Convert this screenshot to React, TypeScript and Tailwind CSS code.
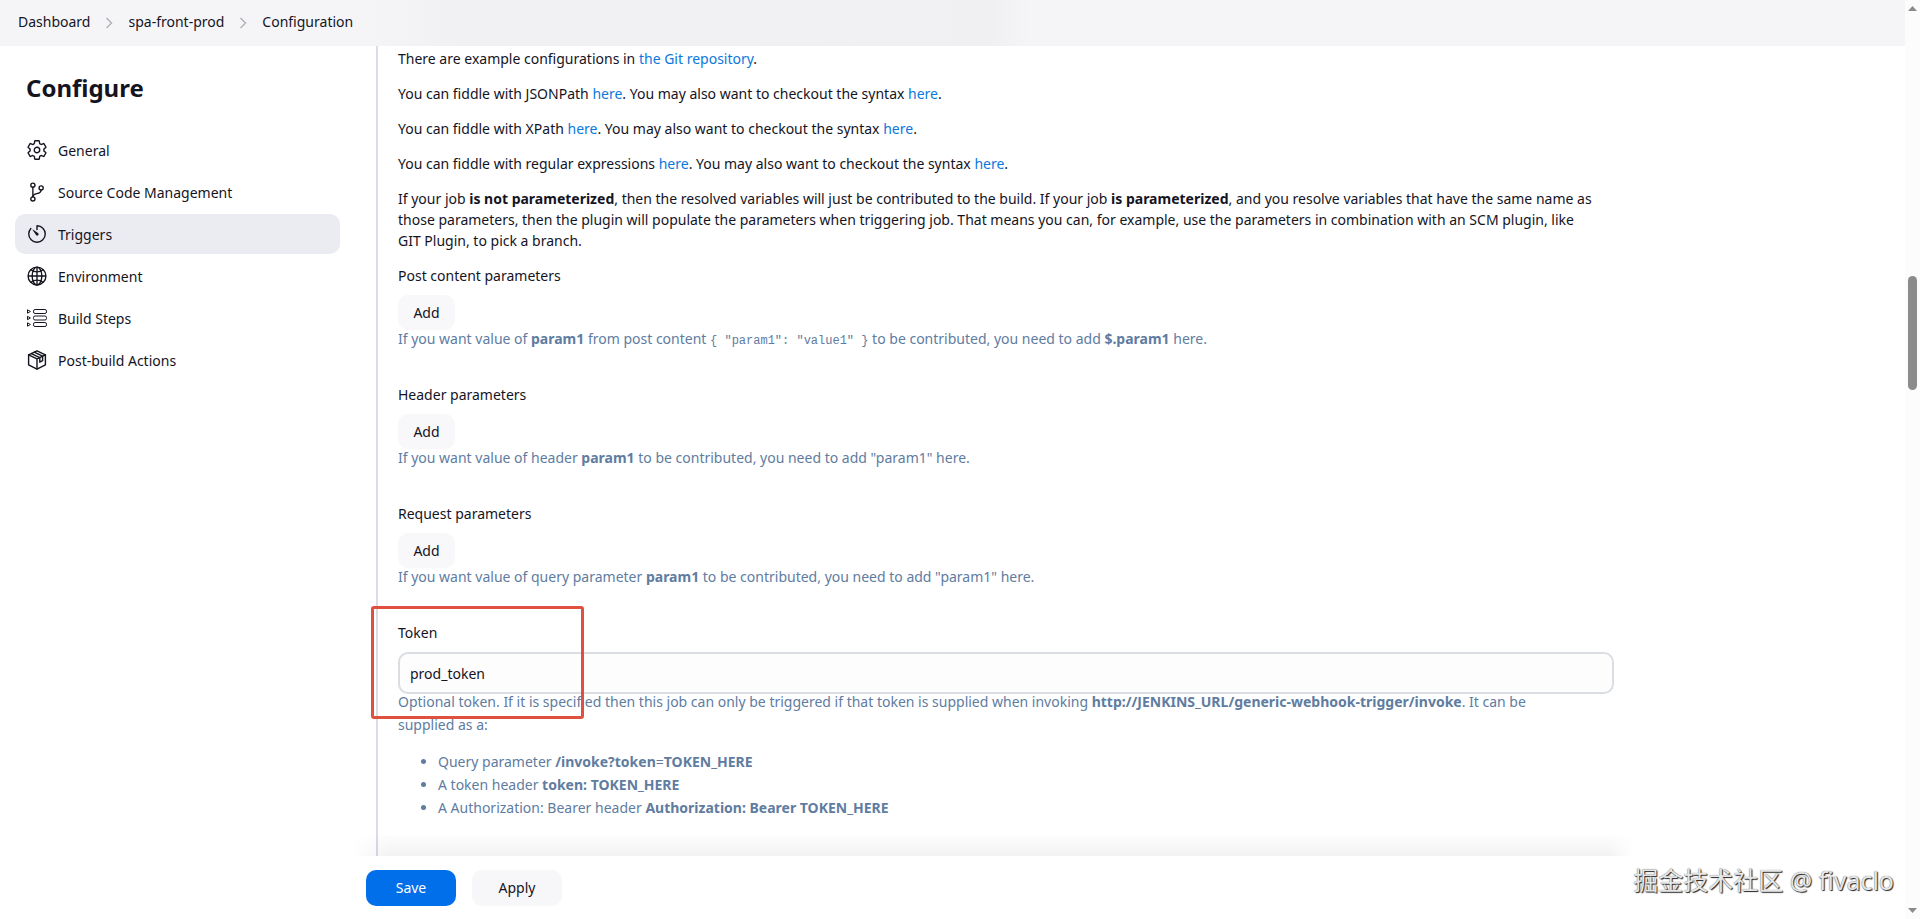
import type { ReactNode } from "react";
import { IoGitBranchOutline, IoGlobeOutline, IoSettingsOutline, IoTimerOutline } from "react-icons/io5";

const crumbs = ["Dashboard", "spa-front-prod", "Configuration"];

function StepsIcon() {
  return (
    <svg viewBox="0 0 22 22" className="size-[22px]" fill="none" stroke="currentColor" strokeWidth="1" strokeLinejoin="round">
      {[4.5, 11, 17.5].map((y) => (
        <g key={y}>
          <path d={`M1.5 ${y - 1.7}v3.4L4.4 ${y}z`} />
          <rect x="7.5" y={y - 2} width="13" height="4" rx="1.6" />
        </g>
      ))}
    </svg>
  );
}

function PackageIcon() {
  return (
    <svg viewBox="-1 -1 22 22" className="size-[22px]" fill="none" stroke="currentColor" strokeWidth="1.4" strokeLinejoin="round" strokeLinecap="round">
      <path d="M10 .9 18.4 4.9v10L10 19.1 1.6 14.9v-10z" />
      <path d="M1.6 4.9 10 8.9l8.4-4M10 8.9v10.2" />
      <path d="M4.4 3.6 12.8 7.6v4.6l2.8-1.5V6.2L7.2 2.2" />
    </svg>
  );
}

const sections: { label: string; icon: ReactNode; active?: boolean }[] = [
  { label: "General", icon: <IoSettingsOutline className="size-[22px]" /> },
  { label: "Source Code Management", icon: <IoGitBranchOutline className="size-[22px]" /> },
  { label: "Triggers", icon: <IoTimerOutline className="size-[22px]" />, active: true },
  { label: "Environment", icon: <IoGlobeOutline className="size-[22px]" /> },
  { label: "Build Steps", icon: <StepsIcon /> },
  { label: "Post-build Actions", icon: <PackageIcon /> },
];

function Link({ children }: { children: ReactNode }) {
  return (
    <a href="#" className="text-[#0a78dc]">
      {children}
    </a>
  );
}

function Parameters({ title, children }: { title: string; children: ReactNode }) {
  return (
    <section className="mb-9">
      <h2 className="mb-[9px]">{title}</h2>
      <button type="button" className="block h-[35px] w-[57px] rounded-[10px] bg-[#f8f8fa]">
        Add
      </button>
      <p className="leading-[18px] text-[#607c9f]">{children}</p>
    </section>
  );
}

export default function App() {
  return (
    <div className="flex h-screen overflow-hidden bg-white font-['Noto_Sans','Noto_Sans_CJK_SC',sans-serif] text-[14px] leading-[21px] text-[#14141f]">
      <div className="flex min-w-0 flex-1 flex-col">
        <header className="flex h-[46px] shrink-0 items-center bg-[#f5f5f8] bg-[linear-gradient(to_right,transparent_19%,#f1f1f3_24%,#f0f0f2_52%,transparent_54%)] pb-[3px] pl-[18px]">
          <nav aria-label="Breadcrumb">
            <ol className="flex items-center">
              {crumbs.map((crumb, i) => (
                <li key={crumb} className="flex items-center">
                  {i > 0 && (
                    <svg viewBox="0 0 8 12" className="mx-[15px] mt-[2px] h-3 w-2" fill="none" stroke="#b3b3bb" strokeWidth="1.5">
                      <path d="M1.5 1 6.5 6l-5 5" />
                    </svg>
                  )}
                  <a href="#">{crumb}</a>
                </li>
              ))}
            </ol>
          </nav>
        </header>

        <div className="flex min-h-0 flex-1">
          <aside className="w-[355px] shrink-0 pt-[26px] pr-[15px] pl-[15px]">
            <h1 className="mb-[26px] pl-[11px] text-[24px] leading-8 font-bold">Configure</h1>
            <nav aria-label="Sections" className="flex flex-col gap-[2px]">
              {sections.map((s) => (
                <a
                  key={s.label}
                  href="#"
                  className={
                    s.active
                      ? "flex h-10 items-center gap-[10px] rounded-[10px] bg-[#ebebf2] pl-[11px]"
                      : "flex h-10 items-center gap-[10px] rounded-[10px] pl-[11px]"
                  }
                >
                  {s.icon}
                  {s.label}
                </a>
              ))}
            </nav>
          </aside>

          <main className="flex max-w-[1275px] min-w-0 flex-1 flex-col">
            <div className="ml-[21px] min-h-0 flex-1 border-l-2 border-[#d9dce3] pt-[2px] pr-4 pl-5">
              <div className="flex flex-col gap-[14px]">
                <p>
                  There are example configurations in <Link>the Git repository</Link>.
                </p>
                <p>
                  You can fiddle with JSONPath <Link>here</Link>. You may also want to checkout the syntax <Link>here</Link>.
                </p>
                <p>
                  You can fiddle with XPath <Link>here</Link>. You may also want to checkout the syntax <Link>here</Link>.
                </p>
                <p>
                  You can fiddle with regular expressions <Link>here</Link>. You may also want to checkout the syntax{" "}
                  <Link>here</Link>.
                </p>
                <p className="mb-[14px]">
                  If your job <b>is not parameterized</b>, then the resolved variables will just be contributed to the build. If your
                  job <b>is parameterized</b>, and you resolve variables that have the same name as
                  <br />
                  those parameters, then the plugin will populate the parameters when triggering job. That means you can, for
                  example, use the parameters in combination with an SCM plugin, like
                  <br />
                  GIT Plugin, to pick a branch.
                </p>
              </div>

              <Parameters title="Post content parameters">
                If you want value of <b>param1</b> from post content{" "}
                <code className="font-['Liberation_Mono',monospace] text-[12px] leading-none">{'{ "param1": "value1" }'}</code> to be
                contributed, you need to add <b>$.param1</b> here.
              </Parameters>
              <Parameters title="Header parameters">
                If you want value of header <b>param1</b> to be contributed, you need to add "param1" here.
              </Parameters>
              <Parameters title="Request parameters">
                If you want value of query parameter <b>param1</b> to be contributed, you need to add "param1" here.
              </Parameters>

              <section className="relative">
                <label htmlFor="token" className="mb-[9px] block">
                  Token
                </label>
                <input
                  id="token"
                  type="text"
                  defaultValue="prod_token"
                  className="block h-[42px] w-full rounded-[10px] border-2 border-[#dadde2] bg-[#fdfdfe] px-[10px] outline-none"
                />
                <div className="-mt-1 leading-[23px] text-[#607c9f]">
                  <p>
                    Optional token. If it is specified then this job can only be triggered if that token is supplied when invoking{" "}
                    <b>http://JENKINS_URL/generic-webhook-trigger/invoke</b>. It can be
                    <br />
                    supplied as a:
                  </p>
                  <ul className="mt-[14px] list-disc pl-10">
                    <li>
                      Query parameter <b>/invoke?token</b>=<b>TOKEN_HERE</b>
                    </li>
                    <li>
                      A token header <b>token: TOKEN_HERE</b>
                    </li>
                    <li>
                      A Authorization: Bearer header <b>Authorization: Bearer TOKEN_HERE</b>
                    </li>
                  </ul>
                </div>
                <div className="pointer-events-none absolute -top-4 -left-[27px] h-[113px] w-[213px] rounded-[3px] border-3 border-[#e0503f]" />
              </section>
            </div>

            <footer className="relative flex h-[63px] shrink-0 gap-4 bg-white pt-[14px] pl-[11px]">
              <div className="pointer-events-none absolute -inset-x-1 bottom-full h-5 bg-linear-to-b from-black/[0.01] to-black/5 [mask-image:linear-gradient(to_right,transparent,black_3%,black_98%,transparent)]" />
              <button type="submit" className="h-9 w-[90px] rounded-[10px] bg-[#006fe9] pb-[2px] text-white">
                Save
              </button>
              <button type="button" className="h-9 w-[90px] rounded-[10px] bg-[#f7f7f9] pb-[2px]">
                Apply
              </button>
            </footer>
          </main>
        </div>
      </div>

      <div aria-hidden="true" className="flex w-[15px] shrink-0 flex-col items-center bg-[#fcfcfc] py-[6px]">
        <svg viewBox="0 0 9 5" className="h-[5px] w-[9px]" fill="#8b8b8b">
          <path d="M4.5 0 9 5H0z" />
        </svg>
        <div className="flex w-full flex-1 flex-col items-center">
          <div className="basis-[29.5%]" />
          <div className="w-[9px] basis-[12.7%] rounded-full bg-[#8b8b8b]" />
        </div>
        <svg viewBox="0 0 9 5" className="h-[5px] w-[9px]" fill="#8b8b8b">
          <path d="M0 0h9L4.5 5z" />
        </svg>
      </div>

      <p className="pointer-events-none absolute right-[26px] bottom-[21px] text-[25px] leading-9 text-[#e6e6e6] [text-shadow:1px_1px_1px_#222,0_0_1px_#555]">
        掘金技术社区 @ fivaclo
      </p>
    </div>
  );
}
